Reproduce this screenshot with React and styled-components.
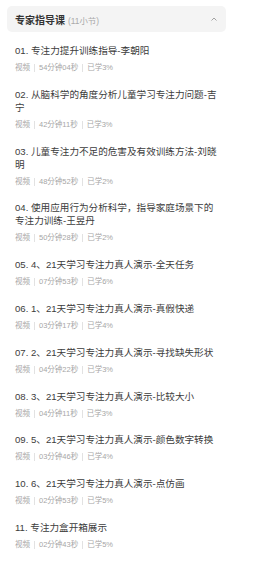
import React, { useState } from "react";
import styled, { createGlobalStyle } from "styled-components";

const GlobalStyle = createGlobalStyle`
  html, body {
    margin: 0;
    padding: 0;
    background: #fff;
  }
  body {
    font-family: "Liberation Sans", "Noto Sans CJK SC", sans-serif;
  }
`;

const lessons = [
  { title: "01. 专注力提升训练指导-李朝阳", time: "54分钟04秒", done: "3%" },
  { title: "02. 从脑科学的角度分析儿童学习专注力问题-吉宁", time: "42分钟11秒", done: "3%" },
  { title: "03. 儿童专注力不足的危害及有效训练方法-刘晓明", time: "48分钟52秒", done: "2%" },
  { title: "04. 使用应用行为分析科学，指导家庭场景下的专注力训练-王昱丹", time: "50分钟28秒", done: "2%" },
  { title: "05. 4、21天学习专注力真人演示-全天任务", time: "07分钟53秒", done: "6%" },
  { title: "06. 1、21天学习专注力真人演示-真假快递", time: "03分钟17秒", done: "4%" },
  { title: "07. 2、21天学习专注力真人演示-寻找缺失形状", time: "04分钟22秒", done: "3%" },
  { title: "08. 3、21天学习专注力真人演示-比较大小", time: "04分钟11秒", done: "3%" },
  { title: "09. 5、21天学习专注力真人演示-颜色数字转换", time: "03分钟46秒", done: "4%" },
  { title: "10. 6、21天学习专注力真人演示-点仿画", time: "02分钟53秒", done: "5%" },
  { title: "11. 专注力盒开箱展示", time: "02分钟43秒", done: "5%" },
];

const Wrapper = styled.div`
  width: 219px;
  padding: 6px 0 0 7px;
`;

const Header = styled.div`
  display: flex;
  align-items: center;
  justify-content: space-between;
  height: 26px;
  padding: 0 8px;
  background: #f4f4f4;
  border-radius: 5px;
  cursor: pointer;
`;

const HeaderTitle = styled.div`
  display: flex;
  align-items: baseline;
  gap: 3px;
  font-size: 10px;
  font-weight: 600;
  color: #333;
`;

const Count = styled.span`
  font-size: 8.4px;
  font-weight: 400;
  color: #aaa;
`;

const Chevron = styled.svg`
  width: 6px;
  height: 4px;
  margin-right: 1px;
  transform: rotate(${(p) => (p.open ? 0 : 180)}deg);
`;

const List = styled.ul`
  list-style: none;
  margin: 4px 0 0;
  padding: 0 7px 0 8px;
`;

const Item = styled.li`
  padding: 8px 0 6.8px;
`;

const Title = styled.div`
  font-size: 9.6px;
  line-height: 13px;
  color: #3c3c3c;
`;

const Meta = styled.div`
  display: flex;
  align-items: center;
  margin-top: 6px;
  font-size: 7.5px;
  line-height: 10px;
  color: #a6a6a6;
`;

const Sep = styled.span`
  width: 1px;
  height: 8px;
  margin: 0 4px;
  background: #e2e2e2;
`;

export default function App() {
  const [open, setOpen] = useState(true);

  return (
    <Wrapper>
      <GlobalStyle />
      <Header onClick={() => setOpen(!open)}>
        <HeaderTitle>
          专家指导课
          <Count>(11小节)</Count>
        </HeaderTitle>
        <Chevron open={open} viewBox="0 0 6 4">
          <polyline points="0.5,3.5 3,1 5.5,3.5" fill="none" stroke="#999" strokeWidth="0.9" />
        </Chevron>
      </Header>
      {open && (
        <List>
          {lessons.map((l) => (
            <Item key={l.title}>
              <Title>{l.title}</Title>
              <Meta>
                视频
                <Sep />
                {l.time}
                <Sep />
                已学{l.done}
              </Meta>
            </Item>
          ))}
        </List>
      )}
    </Wrapper>
  );
}
